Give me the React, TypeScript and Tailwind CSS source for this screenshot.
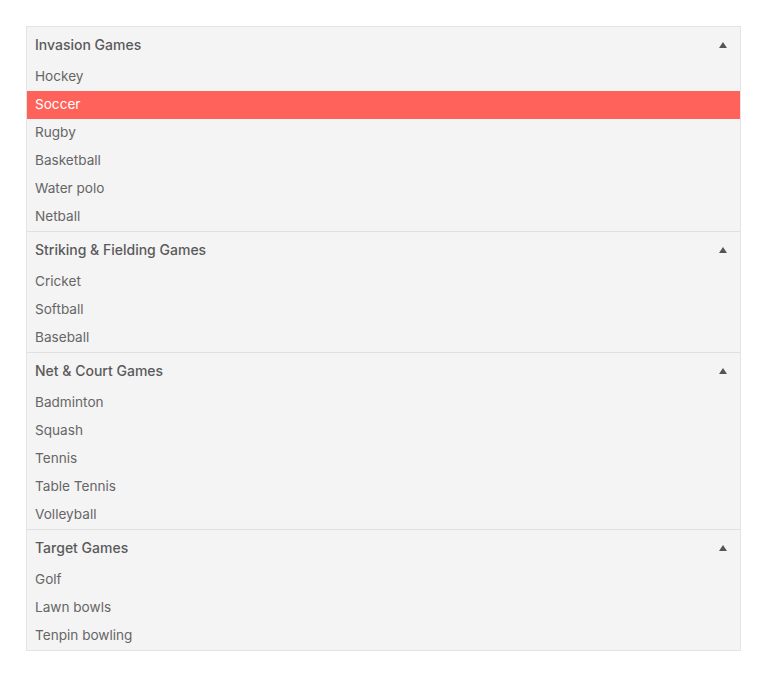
import React from "react";

const groups = [
  { title: "Invasion Games", items: ["Hockey", "Soccer", "Rugby", "Basketball", "Water polo", "Netball"] },
  { title: "Striking & Fielding Games", items: ["Cricket", "Softball", "Baseball"] },
  { title: "Net & Court Games", items: ["Badminton", "Squash", "Tennis", "Table Tennis", "Volleyball"] },
  { title: "Target Games", items: ["Golf", "Lawn bowls", "Tenpin bowling"] },
];

export default function App() {
  return (
    <div className="w-[770px] h-[678px] bg-white pt-[26px] pl-[26px]" style={{ fontFamily: 'Inter, "Liberation Sans", Arial, sans-serif' }}>
      <div className="w-[715px] border border-[#e4e4e4] bg-[#f4f4f4]">
        {groups.map((g, gi) => (
          <div key={g.title} className={gi > 0 ? "border-t border-[#e0e0e0]" : ""}>
            <div className="h-[36px] flex items-center justify-between pl-2 pr-[13px] pb-[1px] text-[14px] font-medium text-[#5a5a5a]">
              <span>{g.title}</span>
              <svg width="8" height="6" viewBox="0 0 8 6">
                <polygon points="4,0 8,6 0,6" fill="#555" />
              </svg>
            </div>
            {g.items.map((it) => (
              <div
                key={it}
                className={
                  "h-[28px] flex items-center pl-2 pb-[1px] text-[13.6px] " +
                  (it === "Soccer" ? "bg-[#ff625a] text-white" : "text-[#666]")
                }
              >
                {it}
              </div>
            ))}
          </div>
        ))}
      </div>
    </div>
  );
}
